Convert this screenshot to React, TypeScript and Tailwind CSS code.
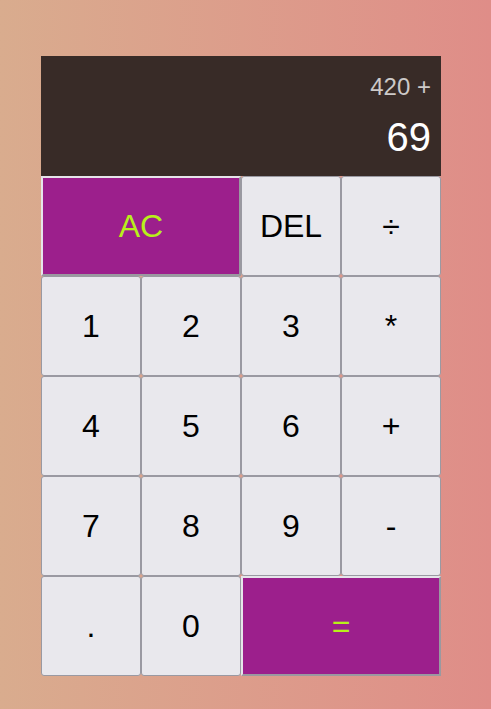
export default function App() {
  const keys: { label: string; kind?: "accent"; span?: boolean }[] = [
    { label: "AC", kind: "accent", span: true },
    { label: "DEL" },
    { label: "÷" },
    { label: "1" },
    { label: "2" },
    { label: "3" },
    { label: "*" },
    { label: "4" },
    { label: "5" },
    { label: "6" },
    { label: "+" },
    { label: "7" },
    { label: "8" },
    { label: "9" },
    { label: "-" },
    { label: "." },
    { label: "0" },
    { label: "=", kind: "accent", span: true },
  ];

  return (
    <div
      className="min-h-[709px] w-full bg-gradient-to-r from-[#d9ac8e] to-[#df8d88] pt-[56px] pl-[41px] flex"
      style={{ fontFamily: '"Liberation Sans", Arial, sans-serif' }}
    >
      <div className="grid grid-cols-[repeat(4,100px)] grid-rows-[120px_repeat(5,100px)] h-fit">
        <div className="col-span-4 bg-[#382b27] flex flex-col items-end justify-around px-[10px] py-[10px] break-all">
          <div className="text-white/75 text-[24px] leading-none">420 +</div>
          <div className="text-white text-[40px] leading-none">69</div>
        </div>
        {keys.map((k) => (
          <button
            key={k.label}
            className={`text-[32px] cursor-pointer ${k.span ? "col-span-2" : ""} ${
              k.kind === "accent"
                ? "bg-[#9c1f8c] text-[#b8f01a] border-2 border-t-[#e6e5ea] border-l-[#e6e5ea] border-r-[#9a99a0] border-b-[#9a99a0]"
                : "bg-[#e9e8ed] text-black border border-[#9a99a2] rounded-[3px]"
            }`}
          >
            {k.label}
          </button>
        ))}
      </div>
    </div>
  );
}
